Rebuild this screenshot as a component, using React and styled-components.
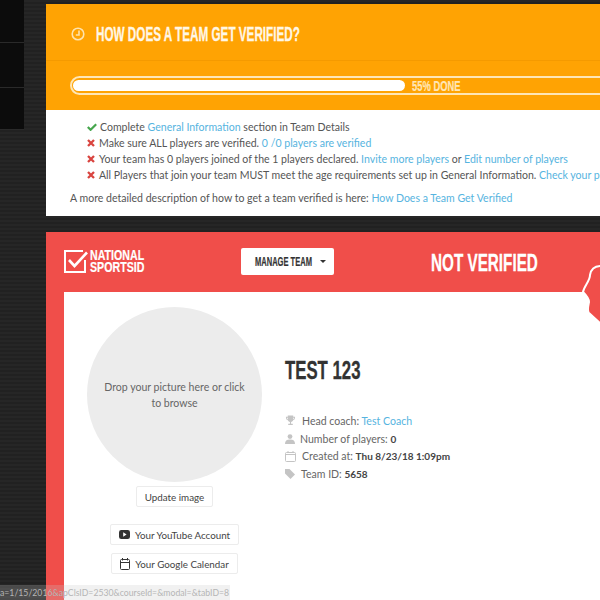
import React from 'react';
import styled, { createGlobalStyle } from 'styled-components';

const Global = createGlobalStyle`
  html, body { margin: 0; padding: 0; background: #232323; }
  * { box-sizing: border-box; }
`;
const display = `"Liberation Sans", sans-serif`;
const Page = styled.div`
  position: relative; width: 600px; height: 600px; overflow: hidden; display: flex; align-items: flex-start; gap: 22px;
  background: repeating-linear-gradient(180deg, #262626 0, #262626 2px, #212121 2px, #212121 4px);
  font-family: Lato, sans-serif; font-size: 10.55px; color: #555;
`;
const Side = styled.div`width: 24px; flex: none; height: 130px; background: #0c0c0c; display: flex; flex-direction: column;`;
const SideRow = styled.div`height: ${p => p.$h}px; flex: none; border-bottom: 1px solid #2a2a2a;`;
const Main = styled.div`width: 640px; flex: none; padding-top: 4px; display: flex; flex-direction: column; gap: 16px;`;
const Squeeze = styled.span`
  display: inline-block; flex: none; width: ${p => p.$w}px; white-space: nowrap; transform: scaleX(${p => p.$x}); transform-origin: left center;
  font-family: ${display}; font-weight: 700; -webkit-text-stroke: ${p => p.$s || 0.3}px currentColor;
`;
const Orange = styled.section`background: #fff; height: 212px;`;
const OrangeHead = styled.div`height: 57px; background: #ffa303; border-bottom: 1px solid #f59a00; display: flex; align-items: center; gap: 11px; padding: 3px 0 0 25px;`;
const Title = styled.h2`margin: 0; font-size: 20px; line-height: 24px; color: #fff7e6; font-weight: 700;`;
const ProgressWrap = styled.div`height: 49px; background: #ffa303; padding: 15px 0 0 24px;`;
const Track = styled.div`height: 19px; width: 600px; border: 2px solid #ffe6b5; border-radius: 10px; padding: 0 1px; display: flex; align-items: center; gap: 7px;`;
const Fill = styled.div`width: 332px; height: 11px; background: #fff; border-radius: 6px;`;
const Done = styled.span`font-size: 14px; color: #ffe6b5;`;
const Body = styled.div`padding: 9px 0 0 24px; white-space: nowrap;`;
const List = styled.ul`list-style: none; margin: 0 0 7px; padding: 0 0 0 17px;`;
const Item = styled.li`height: 16px; display: flex; align-items: center; gap: 3px;`;
const A = styled.span`color: #56b4e0;`;
const Sp = styled.span`white-space: pre;`;
const Para = styled.p`margin: 0; line-height: 16px;`;
const Red = styled.section`position: relative; background: #f04e4a; height: 368px; padding: 0 0 0 18px; display: flex; flex-direction: column;`;
const RedHead = styled.div`height: 60px; display: flex; align-items: center; flex: none;`;
const Logo = styled.div`display: flex; align-items: center; gap: 2px; width: 177px; margin-top: -2px;`;
const LogoText = styled.div`font-size: 14px; line-height: 12px; color: #fff;`;
const Manage = styled.button`width: 93px; height: 27px; border: 0; background: #fff; border-radius: 2px; padding: 0 0 0 14px; font-size: 13px; color: #333; display: flex; align-items: center; gap: 7px; margin-top: -1px;`;
const Caret = styled.span`border: 3px solid transparent; border-top: 3px solid #333; border-bottom: 0;`;
const Status = styled.div`font-size: 24px; color: #fff; margin: 0 0 0 97px;`;
const Panel = styled.div`background: #fff; flex: 1; display: flex; padding: 15px 0 0 23px;`;
const Left = styled.div`width: 175px; display: flex; flex-direction: column; align-items: center; flex: none;`;
const Circle = styled.div`width: 175px; height: 175px; border-radius: 50%; background: #ececec; display: flex; align-items: center; justify-content: center; text-align: center; line-height: 16px; padding: 0 16px; flex: none; color: #666;`;
const Btn = styled.button`height: 21px; padding: 0 8px; background: #fff; border: 1px solid #ececec; border-radius: 2px; font: 9.8px Lato, sans-serif; color: #444; display: flex; align-items: center; gap: 5px; margin-top: ${p => p.$mt}px;`;
const Info = styled.div`padding: 47px 0 0 23px;`;
const Name = styled.h1`margin: 0 0 27px; font-size: 26px; line-height: 30px; color: #333;`;
const Row = styled.div`height: 17.8px; display: flex; align-items: center; gap: ${p => p.$g}px; color: #666;`;
const B = styled.b`color: #444; font-size: 10px;`;
const Bar = styled.div`position: absolute; left: 0; bottom: 0; height: 15px; width: 230px; background: rgba(200,200,200,.25); color: #b5b5b5; font-size: 8.7px; line-height: 15px; white-space: nowrap; overflow: hidden;`;
const Wave = styled.svg`position: absolute; left: 535px; top: 33px;`;

const Check = () => <svg width="10" height="8" viewBox="0 0 10 8"><path d="M.8 4 3.6 6.8 9.2 1.2" stroke="#46a64d" strokeWidth="2.2" fill="none"/></svg>;
const X = () => <svg width="8" height="8" viewBox="0 0 8 8" style={{ marginRight: 1 }}><path d="M1 1 7 7M7 1 1 7" stroke="#d9443f" strokeWidth="2.3" fill="none"/></svg>;
const G = '#c4c4c4';

export default function App() {
  return (
    <Page>
      <Global />
      <Side><SideRow $h={43} /><SideRow $h={45} /><SideRow $h={42} /></Side>
      <Main>
        <Orange>
          <OrangeHead>
            <svg width="14" height="14" viewBox="0 0 14 14" fill="none" stroke="#ffe3ad" strokeWidth="1.6"><circle cx="7" cy="7" r="5.8"/><path d="M8 3.5V8H4.8"/></svg>
            <Title><Squeeze $w={205} $x={0.585}>HOW DOES A TEAM GET VERIFIED?</Squeeze></Title>
          </OrangeHead>
          <ProgressWrap>
            <Track><Fill /><Done><Squeeze $w={48} $x={0.67} $s={0.2}>55% DONE</Squeeze></Done></Track>
          </ProgressWrap>
          <Body>
            <List>
              <Item><Check /><Sp>Complete <A>General Information</A> section in Team Details</Sp></Item>
              <Item><X /><Sp>Make sure ALL players are verified. <A>0 /0 players are verified</A></Sp></Item>
              <Item><X /><Sp>Your team has 0 players joined of the 1 players declared. <A>Invite more players</A> or <A>Edit number of players</A></Sp></Item>
              <Item><X /><Sp>All Players that join your team MUST meet the age requirements set up in General Information. <A>Check your players</A></Sp></Item>
            </List>
            <Para>A more detailed description of how to get a team verified is here: <A>How Does a Team Get Verified</A></Para>
          </Body>
        </Orange>
        <Red>
          <RedHead>
            <Logo>
              <svg width="24" height="23" viewBox="0 0 24 23" fill="none" stroke="#fff" strokeWidth="2"><path d="M19 1H1V22H21V10"/><path d="M5 10 10.5 16 23 2.5" strokeWidth="2.6"/></svg>
              <LogoText>
                <Squeeze $w={55} $x={0.76} $s={0.2}>NATIONAL</Squeeze><br/>
                <Squeeze $w={55} $x={0.76} $s={0.2}>SPORTSID</Squeeze>
              </LogoText>
            </Logo>
            <Manage><Squeeze $w={58} $x={0.58} $s={0.2}>MANAGE TEAM</Squeeze><Caret /></Manage>
            <Status><Squeeze $w={107} $x={0.636}>NOT VERIFIED</Squeeze></Status>
          </RedHead>
          <Panel>
            <Left>
              <Circle>Drop your picture here or click to browse</Circle>
              <Btn $mt={4}>Update image</Btn>
              <Btn $mt={17}>
                <svg width="11" height="9" viewBox="0 0 11 9"><rect width="11" height="9" rx="2.3" fill="#333"/><path d="M4.2 2.3V6.7L7.6 4.5Z" fill="#fff"/></svg>
                Your YouTube Account
              </Btn>
              <Btn $mt={8}>
                <svg width="10" height="12" viewBox="0 0 10 12" fill="none" stroke="#333"><rect x=".5" y="1.5" width="9" height="10" rx="1"/><path d="M.5 4.5H9.5M2.5 0V2.5M7.5 0V2.5"/></svg>
                Your Google Calendar
              </Btn>
            </Left>
            <Info>
              <Name><Squeeze $w={76} $x={0.645}>TEST 123</Squeeze></Name>
              <Row $g={6}><svg width="11" height="11" viewBox="0 0 12 11"><path d="M3 0H9V4C9 6 7.5 6.8 6.6 7V9H8.5V10.5H3.5V9H5.4V7C4.5 6.8 3 6 3 4ZM1 1.5H3V2.5H2C2 3.5 2.4 4 3.2 4.5L2.8 5.3C1.5 4.6 1 3.5 1 1.5ZM11 1.5C11 3.5 10.5 4.6 9.2 5.3L8.8 4.5C9.6 4 10 3.5 10 2.5H9V1.5Z" fill={G}/></svg><Sp>Head coach: <A>Test Coach</A></Sp></Row>
              <Row $g={5}><svg width="10" height="10" viewBox="0 0 10 10" fill={G}><circle cx="5" cy="2.6" r="2.4"/><path d="M0 10C0 7 1.5 5.6 5 5.6S10 7 10 10Z"/></svg><Sp>Number of players: <B>0</B></Sp></Row>
              <Row $g={6}><svg width="11" height="11" viewBox="0 0 11 11" fill="none" stroke={G}><rect x=".5" y="1.5" width="10" height="9" rx="1"/><path d="M.5 3.5H10.5M3 0V2M8 0V2"/></svg><Sp>Created at: <B>Thu 8/23/18 1:09pm</B></Sp></Row>
              <Row $g={6}><svg width="10" height="10" viewBox="0 0 10 10"><path d="M0 0H4.5L10 5.5 5.5 10 0 4.5Z" fill={G}/></svg><Sp>Team ID: <B>5658</B></Sp></Row>
            </Info>
          </Panel>
          <Wave width="20" height="68" viewBox="0 0 20 68"><path d="M20 1C13 1 10 4 9 10C9 16 3 21 2 27C5 30 8 33 8 37C7 42 6 46 8 48L19 58V68H24V1Z" fill="#f04e4a" stroke="#fff" strokeWidth="2" /></Wave>
        </Red>
      </Main>
      <Bar>a=1/15/2016&amp;apClsID=2530&amp;courseId=&amp;modal=&amp;tabID=8</Bar>
    </Page>
  );
}
